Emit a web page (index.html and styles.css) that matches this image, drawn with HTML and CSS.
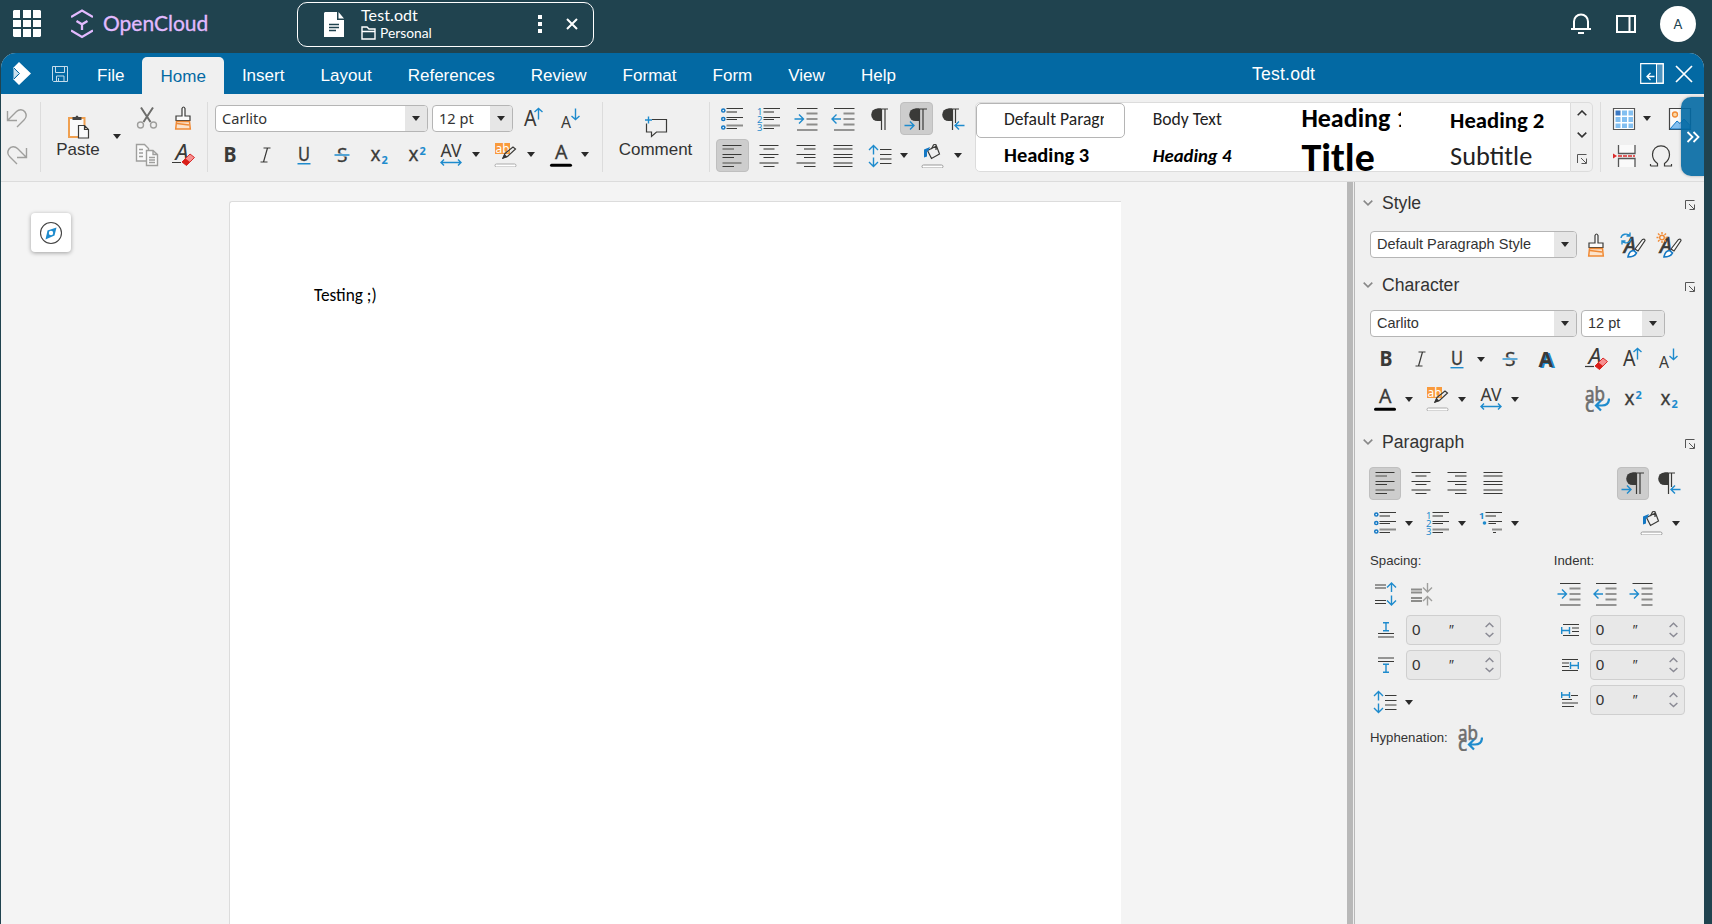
FILE: index.html
```html
<!DOCTYPE html>
<html lang="en">
<head>
    <meta charset="UTF-8">
    <meta name="viewport" content="width=device-width, initial-scale=1.0">
    <title>Test.odt - OpenCloud</title>
    <link rel="stylesheet" href="styles.css">
</head>
<body>
    <!-- Icon sprite -->
    <svg class="sprite" xmlns="http://www.w3.org/2000/svg">
        <symbol id="i-undo" viewBox="0 0 24 24"><path class="g" d="M2.5 5v9.500h9.500M3 14L11.500 5.500C14 3 18 3 20 6c2 3 1 6-1 8l-7 7"/></symbol>
        <symbol id="i-redo" viewBox="0 0 24 24"><path class="g" d="M21.500 5v9.500H12M21 14L12.500 5.500C10 3 6 3 4 6c-2 3-1 6 1 8l7 7"/></symbol>
        <symbol id="i-paste" viewBox="0 0 24 24"><path d="M3 3h15.500v19H3z" fill="#fafafa" stroke="#f0a050" stroke-width="2"/><path d="M6.500 2h3q.5-1.500 1.500-1.500T12.500 2h3v3h-9z" fill="#444"/><path class="d f" d="M12.500 10.500h6l4 4v8.500h-10zM18.500 10.500v4h4"/></symbol>
        <symbol id="i-cut" viewBox="0 0 24 24"><path d="M6 1.500L15.500 16M18 1.500L8.500 16" stroke="#6d6d6b" stroke-width="2" fill="none"/><circle class="g" cx="5.500" cy="19" r="3"/><circle class="g" cx="18.500" cy="19" r="3"/></symbol>
        <symbol id="i-copy" viewBox="0 0 24 24"><path class="g f" d="M1.500 1.500h8l4 4v12.500h-12z"/><path class="g" d="M4 6.500h4M4 10h4M4 13.500h4"/><path class="g f" d="M11.500 7.500h6.500l4.500 4v11h-11zM18 7.500v4h4.500"/><path class="g" d="M14 14.500h6M14 17h6M14 19.500h6"/></symbol>
        <symbol id="i-brush" viewBox="0 0 24 24"><path class="d f" d="M10 10V2.500q1.500-3 3 0V10h5v4.500H4V10z"/><path d="M4.500 15.500h13l.8 7.500H3.700z" fill="#fbe3cc" stroke="#f08a35" stroke-width="1.500"/><path d="M5 17.500l12 1.500" stroke="#f08a35" stroke-width="1.500"/></symbol>
        <symbol id="i-clear" viewBox="0 0 24 24"><text class="t" x="3.500" y="17" font-size="21" font-style="italic" textLength="13" lengthAdjust="spacingAndGlyphs">A</text><path class="d" d="M0 19.500h9" stroke-width="1.600"/><path d="M10 19l8-8 4.500 3.500-8 8z" fill="#f78f8f" stroke="#d92b2b"/><path d="M10 19l3.500-3.500 4.500 3.500-3.500 3.500z" fill="#d91e18"/></symbol>
        <symbol id="i-growfont" viewBox="0 0 24 24"><text class="t" x="2" y="19" font-size="21" textLength="12.500" lengthAdjust="spacingAndGlyphs">A</text><path class="b" d="M16.500 12.500V1.500M12.500 5l4-3.500 4 3.500"/></symbol>
        <symbol id="i-shrinkfont" viewBox="0 0 24 24"><text class="t" x="2" y="21" font-size="17" textLength="10" lengthAdjust="spacingAndGlyphs">A</text><path class="b" d="M16.500 1.500v11M12.500 9l4 3.500 4-3.500"/></symbol>
        <symbol id="i-bold" viewBox="0 0 24 24"><text class="t" x="6.500" y="19" font-size="20.500" font-weight="700" textLength="13" lengthAdjust="spacingAndGlyphs">B</text></symbol>
        <symbol id="i-italic" viewBox="0 0 24 24"><path class="d" d="M9.500 5h7M6.500 19h7M13.500 5l-4 14" stroke-width="1.800"/></symbol>
        <symbol id="i-underline" viewBox="0 0 24 24"><text class="t" x="6" y="18" font-size="20" stroke="#3a3a38" stroke-width=".4" textLength="12" lengthAdjust="spacingAndGlyphs">U</text><path class="b" d="M5.500 20.700h13" stroke-width="1.200"/></symbol>
        <symbol id="i-strike" viewBox="0 0 24 24"><text class="t" x="7" y="19" font-size="20" stroke="#3a3a38" stroke-width=".3" textLength="10.500" lengthAdjust="spacingAndGlyphs">S</text><path d="M4 10.500h16v3H4z" fill="#f0f0f0"/><path class="b" d="M4.500 12h15"/></symbol>
        <symbol id="i-sub" viewBox="0 0 24 24"><text class="t" x="3.500" y="18" font-size="20" stroke="#3a3a38" stroke-width=".3" textLength="10" lengthAdjust="spacingAndGlyphs">x</text><text class="tb" x="14.500" y="21" font-size="11" font-weight="700">2</text></symbol>
        <symbol id="i-sup" viewBox="0 0 24 24"><text class="t" x="3.500" y="18" font-size="20" stroke="#3a3a38" stroke-width=".3" textLength="10" lengthAdjust="spacingAndGlyphs">x</text><text class="tb" x="14.500" y="12" font-size="11" font-weight="700">2</text></symbol>
        <symbol id="i-spacing" viewBox="0 0 24 24"><text class="t" x="1.500" y="14" font-size="18" textLength="21" lengthAdjust="spacingAndGlyphs">AV</text><path class="b" d="M2 19.500h20M5 16.500l-3 3 3 3M19 16.500l3 3-3 3"/></symbol>
        <symbol id="i-highlight" viewBox="0 0 24 24"><path d="M1 0h15v11H1z" fill="#f99a3c"/><text x="1.500" y="9.500" font-size="12" fill="#fff" font-family="Noto Sans">ab</text><path class="d" d="M9 15l2-4.500 8-6.500 2.500 2-8 7.500z" fill="#f0f0f0"/><path d="M8 16l2.500-5 3 3z" fill="#333"/><rect x="1" y="21" width="21" height="3" rx="1.500" fill="#fff" stroke="#aaa" stroke-width="1"/></symbol>
        <symbol id="i-color" viewBox="0 0 24 24"><text class="t" x="6" y="16" font-size="20" stroke="#3a3a38" stroke-width=".3" textLength="12.500" lengthAdjust="spacingAndGlyphs">A</text><rect x="1" y="20.800" width="22" height="3" rx="1.500" fill="#000"/></symbol>
        <symbol id="i-comment" viewBox="0 0 24 24"><path class="d" d="M8 4.500h14.500v12.500h-10L7.500 21.500v-4.500h-5V8.500"/><path class="b" d="M1 5h7M4.500 1.500v7"/></symbol>
        <symbol id="i-bullets" viewBox="0 0 24 24"><circle class="b2" cx="3.300" cy="3.500" r="1.600"/><circle class="b2" cx="3.300" cy="12" r="1.600"/><circle class="b2" cx="3.300" cy="20.500" r="1.600"/><path class="d" d="M6.500 1.500H23M6.500 10.500H23M6.500 12.500H17M6.500 21.500H17" stroke-width="1.200"/><path class="m" d="M6.500 5H17M6.500 18.500H23"/></symbol>
        <symbol id="i-numbers" viewBox="0 0 24 24"><text class="tb" x="0" y="8" font-size="9.500">1</text><text class="tb" x="0" y="16" font-size="9.500">2</text><text class="tb" x="0" y="24" font-size="9.500">3</text><path class="d" d="M6.500 1.500H23M6.500 10.500H23M6.500 12.500H17M6.500 21.500H17" stroke-width="1.200"/><path class="m" d="M6.500 5H17M6.500 18.500H23"/></symbol>
        <symbol id="i-outline" viewBox="0 0 24 24"><text class="tb" x="0" y="8" font-size="9.500" font-weight="700">1</text><circle cx="5.500" cy="12" r="1.800" fill="#1e8bcd"/><path class="d" d="M6.500 1.500H23M9.500 10.500H23M9.500 12.500H17M14 21.500h3" stroke-width="1.200"/><path class="m" d="M6.500 5H17M13 18.500H23"/></symbol>
        <symbol id="i-indent" viewBox="0 0 24 24"><path class="d" d="M3 1.500h20.500M12.500 12h11M3 23h20.500" stroke-width="1.300"/><path class="m" d="M12.500 6.500h11M12.500 17.500h11"/><path class="b" d="M.5 12h9M5 7.500L9.500 12 5 16.500"/></symbol>
        <symbol id="i-outdent" viewBox="0 0 24 24"><path class="d" d="M3 1.500h20.500M12.500 12h11M3 23h20.500" stroke-width="1.300"/><path class="m" d="M12.500 6.500h11M12.500 17.500h11"/><path class="b" d="M10 12H1M5.500 7.500L1 12l4.500 4.500"/></symbol>
        <symbol id="i-hanging" viewBox="0 0 24 24"><path class="d" d="M3.500 1.500h20M12.500 12h11M12.500 23h11" stroke-width="1.300"/><path class="m" d="M12.500 6.500h11M12.500 17.500h11"/><path class="b" d="M.5 12h9M5 7.500L9.500 12 5 16.500"/></symbol>
        <symbol id="i-para" viewBox="0 0 24 24"><path d="M13 1.500H9.500a6.300 6.300 0 000 12.600H13z" fill="#3a3a38"/><path class="d" d="M9.500 2h10.500M13.500 2v21M17 2v21"/></symbol>
        <symbol id="i-ltr" viewBox="0 0 24 24"><path d="M15 1.500h-3.500a6.300 6.300 0 000 12.600H15z" fill="#3a3a38"/><path class="d" d="M11.500 2h11.500M15.500 2v21M19 2v21" stroke-width="1.600"/><path class="b" d="M.5 18.500H10M6 14.500l4 4-4 4"/></symbol>
        <symbol id="i-rtl" viewBox="0 0 24 24"><path d="M11 1.500H7.500a6.300 6.300 0 000 12.600H11z" fill="#3a3a38"/><path class="d" d="M7.500 2h10.500M11.500 2v21M14.500 2v14" stroke-width="1.600"/><path class="b" d="M23.500 18.500H14M18 14.500l-4 4 4 4"/></symbol>
        <symbol id="i-left" viewBox="0 0 24 24"><path class="m" d="M2.500 5H14M2.500 19h19"/><path class="d" d="M2.500 1.500h19M2.500 10.500h19M2.500 13.500H14M2.500 22.500H14" stroke-width="1.300"/></symbol>
        <symbol id="i-center" viewBox="0 0 24 24"><path class="m" d="M6.500 5h11M2.500 19h19"/><path class="d" d="M2.500 1.500h19M2.500 10.500h19M6.500 13.500h11M6.500 22.500h11" stroke-width="1.300"/></symbol>
        <symbol id="i-right" viewBox="0 0 24 24"><path class="m" d="M10 5h11.500M2.500 19h19"/><path class="d" d="M2.500 1.500h19M2.500 10.500h19M10 13.500h11.500M10 22.500h11.500" stroke-width="1.300"/></symbol>
        <symbol id="i-justify" viewBox="0 0 24 24"><path class="m" d="M2.500 5h19M2.500 19h19"/><path class="d" d="M2.500 1.500h19M2.500 10.500h19M2.500 13.500h19M2.500 22.500h19" stroke-width="1.300"/></symbol>
        <symbol id="i-linespace" viewBox="0 0 24 24"><path class="b" d="M5.500 10.500V1.500M1 6l4.500-4.500L10 6M5.500 13.500v9M1 18l4.500 4.500L10 18"/><path class="d" d="M12 5.500h11.500M12 10.500h11.500M12 19.500h11.500" stroke-width="1.300"/><path class="m" d="M12 15h11.500"/></symbol>
        <symbol id="i-fill" viewBox="0 0 24 24"><path class="d" d="M7.500 8l9-4.500 3 8-8 4.500zM11.500 6.500l2-4q2-1.500 2.500 0v5" fill="#fff" transform="translate(-1 -1.500)"/><path d="M3 13.500V5.500l6-2.500-1.500 3.500-1.500 1v5z" fill="#1478c4"/><rect x="1" y="21" width="21" height="3" rx="1.500" fill="#fff" stroke="#999"/></symbol>
        <symbol id="i-shadowa" viewBox="0 0 24 24"><text x="6" y="20.500" font-size="22" font-weight="700" font-family="Noto Sans" fill="#1e8bcd" textLength="15" lengthAdjust="spacingAndGlyphs">A</text><text class="t" x="4.500" y="19.500" font-size="22" font-weight="700" textLength="14.500" lengthAdjust="spacingAndGlyphs">A</text></symbol>
        <symbol id="i-hyphen" viewBox="0 0 26 26"><text x="1" y="14.500" font-size="20" font-family="Noto Sans" fill="#6d6d6d" stroke="#6d6d6d" stroke-width=".6" textLength="20" lengthAdjust="spacingAndGlyphs">ab</text><text x="1" y="25.500" font-size="19" font-family="Noto Sans" fill="#6d6d6d" stroke="#6d6d6d" stroke-width=".6">c</text><path d="M25 12.500c0 5-2 7-7 7h-6M17 14.500l-5 5 5 5" fill="none" stroke="#1e8bcd" stroke-width="2.200"/></symbol>
        <symbol id="i-table" viewBox="0 0 24 24"><path d="M1.500 1.500h21v21h-21z" fill="#fff" stroke="#555" stroke-width="1.200"/><path d="M3.500 3.500h5v5h-5z" fill="#3b78c2"/><path d="M10 3.500h5v5h-5zM16.500 3.500h4.500v5h-4.500zM3.500 10h5v5h-5zM10 10h5v5h-5zM16.500 10h4.500v5h-4.500zM3.500 16.500h5v4.500h-5zM10 16.500h5v4.500h-5zM16.500 16.500h4.500v4.500h-4.500z" fill="#83bff0"/></symbol>
        <symbol id="i-image" viewBox="0 0 24 24"><path d="M1.500 1.500h21v21h-21z" fill="#fafafa" stroke="#444" stroke-width="1.200"/><circle cx="7" cy="7.500" r="2.500" fill="#fbd9a8" stroke="#f08a35" stroke-width="1.300"/><path d="M2 22l7-8 3 2.500L16 12l6 6.500V22z" fill="#83bff0" stroke="#1478c4"/></symbol>
        <symbol id="i-break" viewBox="0 0 24 24"><path d="M6.500 1v8.500h16.500V1M6.500 23v-8.500h16.500V23" fill="#fafafa" stroke="#555" stroke-width="1.300"/><path d="M6 12h17" stroke="#d92b2b" stroke-width="1.500" stroke-dasharray="4 1"/><path d="M1 9.500l4 2.500-4 2.500z" fill="#d92b2b"/></symbol>
        <symbol id="i-omega" viewBox="0 0 24 24"><path class="d" d="M1.500 22h7v-2.500Q3.500 16 3.500 10.500C3.500 5 7.500 1.800 12 1.800S20.500 5 20.500 10.500q0 5.500-5 9V22h7v-2M1.500 20v2"/></symbol>
        <symbol id="i-caret" viewBox="0 0 8 5"><path d="M0 0h8L4 5z" fill="#2a2a2a"/></symbol>
        <symbol id="i-dialog" viewBox="0 0 10 10"><path d="M.5 9V.5H9.500M4 4l5 5M9.500 4.500v5h-5" fill="none" stroke="#555" stroke-width="1"/></symbol>
        <symbol id="i-chev" viewBox="0 0 10 6"><path d="M.7.7L5 4.800 9.300.7" fill="none" stroke="currentColor" stroke-width="1.600"/></symbol>
        <symbol id="i-up" viewBox="0 0 10 6"><path d="M.7 5.200L5 1l4.300 4.200" fill="none" stroke="currentColor" stroke-width="1.600"/></symbol>
        <symbol id="i-update" viewBox="0 0 26 26"><text class="t" x="4" y="20.500" font-size="21" font-style="italic" stroke="#3a3a38" stroke-width=".7">A</text><path class="b" d="M1 6a5 4.500 0 019-2M10 .5V4H6.500M11 6.500a5 4.500 0 01-9 2.500M2 12.500V9h3.500" stroke-width="1.700"/><path class="d f" d="M15 17l7.500-9.500q2.500-1 2.500 1L18 19z"/><path d="M8 25q1-6 5.500-6.500l3 2.500q-2 4-8.500 4z" fill="#fff" stroke="#1478c4" stroke-width="1.600"/></symbol>
        <symbol id="i-newstyle" viewBox="0 0 26 26"><text class="t" x="4" y="20.500" font-size="21" font-style="italic" stroke="#3a3a38" stroke-width=".7">A</text><g stroke="#f08a35" stroke-width="1.400" fill="none"><circle cx="6" cy="5.500" r="2.300"/><path d="M6 0v2M6 9v2M.5 5.500h2M9.500 5.500h2M2 1.500L3.500 3M8.500 8L10 9.500M10 1.500L8.500 3M3.500 8L2 9.500"/></g><path class="d f" d="M15 17l7.500-9.500q2.500-1 2.500 1L18 19z"/><path d="M8 25q1-6 5.500-6.500l3 2.500q-2 4-8.500 4z" fill="#fff" stroke="#1478c4" stroke-width="1.600"/></symbol>
        <symbol id="i-inc" viewBox="0 0 24 24"><path class="d" d="M2 3h11M2 6h11M2 18.500h11M2 21.500h11" stroke-width="1.300"/><path class="b" d="M18.500 10V1M14 5.500L18.500 1 23 5.500M18.500 13.500v9.500M14 18.500l4.500 4.500 4.500-4.500" stroke-width="1.600"/></symbol>
        <symbol id="i-dec" viewBox="0 0 24 24"><path class="m" d="M2 7.500h11M2 10.500h11M2 16h11M2 19h11" stroke-width="1.300"/><path class="g" d="M18.500 1v9M14 5.500l4.500 4.500L23 5.500M18.500 23.500v-9M14 19l4.500-4.500L23 19"/></symbol>
        <symbol id="i-above" viewBox="0 0 16 16"><path class="b" d="M5 .8h6M8 .8v8M5 8.800h6"/><path class="d" d="M0 11.500h16M0 15h16"/></symbol>
        <symbol id="i-below" viewBox="0 0 16 16"><path class="b" d="M5 7.200h6M8 7.200v8M5 15.200h6"/><path class="d" d="M0 1h16M0 4.500h16"/></symbol>
        <symbol id="i-before" viewBox="0 0 18 16"><path class="d" d="M2 2.500h16M11 6h7M11 9.500h7M2 13.500h16" stroke-width="1.300"/><path class="b" d="M.7 5v7M8.500 5v7M.7 8.500h8"/></symbol>
        <symbol id="i-after" viewBox="0 0 18 16"><path class="d" d="M1 2.500h16M1 6h7M1 9.500h7M1 13.500h16" stroke-width="1.300"/><path class="b" d="M9.500 5v7M17.300 5v7M9.500 8.500h8"/></symbol>
        <symbol id="i-first" viewBox="0 0 18 16"><path class="d" d="M10 3.500h7M1 7.500h10M1 11h16M1 14.500h12" stroke-width="1.300"/><path class="b" d="M.7 0v6M8.500 0v6M.7 3h8"/></symbol>
    </svg>

    <header class="topbar">
        <svg class="apps" viewBox="0 0 28 28"><path fill="#fff" d="M1 0h6v8H0V1zM10 0h8v8h-8zM20 0h7l1 1v7h-8zM0 10h8v7H0zM10 10h8v7h-8zM20 10h8v7h-8zM0 19h8v8H1l-1-1zM10 19h8v8h-8zM20 19h8v7l-1 1h-7z"/></svg>
        <svg class="logo" viewBox="0 0 22 30"><g fill="none" stroke="#e2baff" stroke-width="2.300"><path d="M0 8l11-6.500L22 8M0 21.500L11 28l11-6.500M5.500 12l5.500 3.300 5.500-3.300M11 15v6"/></g></svg>
        <span class="brand">OpenCloud</span>
        <div class="file-tab">
            <svg class="doc" viewBox="0 0 20 26"><path fill="#fff" d="M1 0h12v8h7v17H0V1zM14.500 0L20 6.500h-5.500z"/><path d="M5 12.500h10M5 15.500h10M5 18.500h7" stroke="#20434f" stroke-width="1.500"/></svg>
            <div class="file-info">
                <span class="file-name">Test.odt</span>
                <span class="file-space"><svg viewBox="0 0 15 14"><path d="M1 13V1h5l2 2h6v10zM1 5.500h13" fill="none" stroke="#fff" stroke-width="1.400"/></svg>Personal</span>
            </div>
            <svg class="dots" viewBox="0 0 4 18"><path fill="#fff" d="M0 0h4v4H0zM0 7h4v4H0zM0 14h4v4H0z"/></svg>
            <svg class="close" viewBox="0 0 12 12"><path d="M1 1l10 10M11 1L1 11" stroke="#fff" stroke-width="2"/></svg>
        </div>
        <div class="top-right">
            <svg class="bell" viewBox="0 0 20 22"><path d="M3 16V8.500a7 7 0 0114 0V16M0 16h20M7 20h6" fill="none" stroke="#fff" stroke-width="2"/></svg>
            <svg class="panel" viewBox="0 0 20 18"><path d="M1 1h18v16H1zM13.500 1v16" fill="none" stroke="#fff" stroke-width="2"/></svg>
            <span class="avatar">A</span>
        </div>
    </header>

    <main class="office">
        <nav class="menubar">
            <svg class="collabora" viewBox="0 0 18 23"><path fill="#fff" d="M6 0l12 11.500L6 23 0 17l5.500-5.500L0 6z"/><path d="M.5 6.500l5 5-5 5z" fill="#fff" opacity=".8"/><path d="M1 6l5.500 5.500L1 17" stroke="#0369a3" fill="none"/></svg>
            <svg class="save" viewBox="0 0 16 16"><path d="M.5.5h15v15h-14l-1-1zM3.500.5v6h9v-6M4.500 15.500V10h7.500v5.500M6.500 12v3" fill="none" stroke="#c5dceb"/></svg>
            <div class="tabs">
                <a class="tab">File</a>
                <a class="tab active">Home</a>
                <a class="tab">Insert</a>
                <a class="tab">Layout</a>
                <a class="tab">References</a>
                <a class="tab">Review</a>
                <a class="tab">Format</a>
                <a class="tab">Form</a>
                <a class="tab">View</a>
                <a class="tab">Help</a>
            </div>
            <span class="doc-title">Test.odt</span>
            <svg class="fold" viewBox="0 0 24 21"><path d="M.7.7h22.600v19.600H.7z" fill="none" stroke="#fff" stroke-width="1.200"/><path d="M16.500 1h6.500v19h-6.500z" fill="#4d94c0" stroke="#fff"/><path d="M14.500 13.500H7M10.500 10L7 13.500l3.500 3.500" fill="none" stroke="#fff" stroke-width="1.300"/></svg>
            <svg class="close-doc" viewBox="0 0 18 18"><path d="M1 1l16 16M17 1L1 17" stroke="#fff" stroke-width="1.700"/></svg>
        </nav>

        <div class="toolbar">
            <div class="group g-history">
                <div class="row"><svg class="ico"><use href="#i-undo"/></svg></div>
                <div class="row"><svg class="ico"><use href="#i-redo"/></svg></div>
            </div>
            <div class="group g-clip">
                <div class="big"><svg class="ico"><use href="#i-paste"/></svg><span>Paste</span></div>
                <svg class="caret"><use href="#i-caret"/></svg>
                <div class="clip-tools">
                    <div class="row"><span class="btn"><svg class="ico"><use href="#i-cut"/></svg></span><span class="btn"><svg class="ico"><use href="#i-brush"/></svg></span></div>
                    <div class="row"><span class="btn"><svg class="ico"><use href="#i-copy"/></svg></span><span class="btn"><svg class="ico"><use href="#i-clear"/></svg></span></div>
                </div>
            </div>
            <div class="group g-font">
                <div class="row combos">
                    <div class="combo font"><span>Carlito</span><i><svg class="caret"><use href="#i-caret"/></svg></i></div>
                    <div class="combo size"><span>12 pt</span><i><svg class="caret"><use href="#i-caret"/></svg></i></div>
                    <div class="resize">
                        <svg class="ico"><use href="#i-growfont"/></svg>
                        <svg class="ico"><use href="#i-shrinkfont"/></svg>
                    </div>
                </div>
                <div class="row">
                    <span class="btn"><svg class="ico"><use href="#i-bold"/></svg></span>
                    <span class="btn"><svg class="ico"><use href="#i-italic"/></svg></span>
                    <span class="btn"><svg class="ico"><use href="#i-underline"/></svg></span>
                    <span class="btn"><svg class="ico"><use href="#i-strike"/></svg></span>
                    <span class="btn"><svg class="ico"><use href="#i-sub"/></svg></span>
                    <span class="btn"><svg class="ico"><use href="#i-sup"/></svg></span>
                    <span class="btn kern"><svg class="ico"><use href="#i-spacing"/></svg></span><span class="drop"><svg class="caret"><use href="#i-caret"/></svg></span>
                    <span class="btn"><svg class="ico"><use href="#i-highlight"/></svg></span><span class="drop"><svg class="caret"><use href="#i-caret"/></svg></span>
                    <span class="btn"><svg class="ico"><use href="#i-color"/></svg></span><span class="drop"><svg class="caret"><use href="#i-caret"/></svg></span>
                </div>
            </div>
            <div class="group g-comment">
                <div class="big"><svg class="ico"><use href="#i-comment"/></svg><span>Comment</span></div>
            </div>
            <div class="group g-para">
                <div class="row">
                    <span class="btn"><svg class="ico"><use href="#i-bullets"/></svg></span>
                    <span class="btn"><svg class="ico"><use href="#i-numbers"/></svg></span>
                    <span class="btn"><svg class="ico"><use href="#i-indent"/></svg></span>
                    <span class="btn"><svg class="ico"><use href="#i-outdent"/></svg></span>
                    <span class="btn"><svg class="ico"><use href="#i-para"/></svg></span>
                    <span class="btn"><b class="pressed"><svg class="ico"><use href="#i-ltr"/></svg></b></span>
                    <span class="btn"><svg class="ico"><use href="#i-rtl"/></svg></span>
                </div>
                <div class="row">
                    <span class="btn"><b class="pressed"><svg class="ico"><use href="#i-left"/></svg></b></span>
                    <span class="btn"><svg class="ico"><use href="#i-center"/></svg></span>
                    <span class="btn"><svg class="ico"><use href="#i-right"/></svg></span>
                    <span class="btn"><svg class="ico"><use href="#i-justify"/></svg></span>
                    <span class="btn"><svg class="ico"><use href="#i-linespace"/></svg></span><span class="drop"><svg class="caret"><use href="#i-caret"/></svg></span>
                    <span class="btn"><svg class="ico"><use href="#i-fill"/></svg></span><span class="drop"><svg class="caret"><use href="#i-caret"/></svg></span>
                </div>
            </div>
            <div class="group g-styles">
                <div class="gallery">
                    <div class="style selected"><span class="s-default">Default Paragraph</span></div>
                    <div class="style"><span class="s-body">Body Text</span></div>
                    <div class="style"><span class="s-h1">Heading 1</span></div>
                    <div class="style"><span class="s-h2">Heading 2</span></div>
                    <div class="style"><span class="s-h3">Heading 3</span></div>
                    <div class="style"><span class="s-h4">Heading 4</span></div>
                    <div class="style"><span class="s-title">Title</span></div>
                    <div class="style"><span class="s-sub">Subtitle</span></div>
                </div>
                <div class="gallery-nav">
                    <svg class="chev"><use href="#i-up"/></svg>
                    <svg class="chev"><use href="#i-chev"/></svg>
                    <svg class="dialog"><use href="#i-dialog"/></svg>
                </div>
            </div>
            <div class="group g-insert">
                <div class="row"><svg class="ico"><use href="#i-table"/></svg><svg class="caret"><use href="#i-caret"/></svg><svg class="ico"><use href="#i-image"/></svg></div>
                <div class="row"><svg class="ico"><use href="#i-break"/></svg><svg class="ico omega"><use href="#i-omega"/></svg></div>
            </div>
            <div class="scroll-right"><svg viewBox="0 0 14 12"><path d="M1.500 1l5 5-5 5M7.500 1l5 5-5 5" fill="none" stroke="#fff" stroke-width="1.800"/></svg></div>
        </div>

        <div class="workspace">
            <div class="canvas">
                <div class="navigator"><svg viewBox="0 0 24 24"><circle cx="12" cy="12" r="10.500" fill="none" stroke="#444" stroke-width="1.100"/><path d="M17.500 6.500l-2 8-9 4 2-9z" fill="#1e8bcd"/><circle cx="12" cy="12" r="2.200" fill="#fff"/></svg></div>
                <div class="page"><p>Testing ;)</p></div>
            </div>
            <aside class="sidebar">
                <div class="section-head"><svg class="chev"><use href="#i-chev"/></svg><h2>Style</h2><svg class="dialog"><use href="#i-dialog"/></svg></div>
                <div class="side-row style-row">
                    <div class="combo wide"><span>Default Paragraph Style</span><i><svg class="caret"><use href="#i-caret"/></svg></i></div>
                    <div class="cells">
                        <span class="cell"><svg class="ico"><use href="#i-brush"/></svg></span>
                        <span class="cell"><svg class="ico lg"><use href="#i-update"/></svg></span>
                        <span class="cell"><svg class="ico lg"><use href="#i-newstyle"/></svg></span>
                    </div>
                </div>

                <div class="section-head char-head"><svg class="chev"><use href="#i-chev"/></svg><h2>Character</h2><svg class="dialog"><use href="#i-dialog"/></svg></div>
                <div class="side-row font-row">
                    <div class="combo wide"><span>Carlito</span><i><svg class="caret"><use href="#i-caret"/></svg></i></div>
                    <div class="combo small"><span>12 pt</span><i><svg class="caret"><use href="#i-caret"/></svg></i></div>
                </div>
                <div class="side-row icons">
                    <div class="cells">
                        <span class="cell"><svg class="ico"><use href="#i-bold"/></svg></span>
                        <span class="cell"><svg class="ico"><use href="#i-italic"/></svg></span>
                        <span class="cell"><svg class="ico"><use href="#i-underline"/></svg></span><span class="drop"><svg class="caret"><use href="#i-caret"/></svg></span>
                        <span class="cell"><svg class="ico"><use href="#i-strike"/></svg></span>
                        <span class="cell"><svg class="ico"><use href="#i-shadowa"/></svg></span>
                    </div>
                    <div class="cells">
                        <span class="cell"><svg class="ico"><use href="#i-clear"/></svg></span>
                        <span class="cell"><svg class="ico"><use href="#i-growfont"/></svg></span>
                        <span class="cell"><svg class="ico"><use href="#i-shrinkfont"/></svg></span>
                    </div>
                </div>
                <div class="side-row icons">
                    <div class="cells">
                        <span class="cell"><svg class="ico"><use href="#i-color"/></svg></span><span class="drop"><svg class="caret"><use href="#i-caret"/></svg></span>
                        <span class="cell"><svg class="ico"><use href="#i-highlight"/></svg></span><span class="drop"><svg class="caret"><use href="#i-caret"/></svg></span>
                        <span class="cell"><svg class="ico"><use href="#i-spacing"/></svg></span><span class="drop"><svg class="caret"><use href="#i-caret"/></svg></span>
                    </div>
                    <div class="cells">
                        <span class="cell"><svg class="ico lg"><use href="#i-hyphen"/></svg></span>
                        <span class="cell"><svg class="ico"><use href="#i-sup"/></svg></span>
                        <span class="cell"><svg class="ico"><use href="#i-sub"/></svg></span>
                    </div>
                </div>

                <div class="section-head para-head"><svg class="chev"><use href="#i-chev"/></svg><h2>Paragraph</h2><svg class="dialog"><use href="#i-dialog"/></svg></div>
                <div class="side-row icons">
                    <div class="cells">
                        <span class="cell"><b class="pressed"><svg class="ico"><use href="#i-left"/></svg></b></span>
                        <span class="cell"><svg class="ico"><use href="#i-center"/></svg></span>
                        <span class="cell"><svg class="ico"><use href="#i-right"/></svg></span>
                        <span class="cell"><svg class="ico"><use href="#i-justify"/></svg></span>
                    </div>
                    <div class="cells">
                        <span class="cell"><b class="pressed"><svg class="ico"><use href="#i-ltr"/></svg></b></span>
                        <span class="cell"><svg class="ico"><use href="#i-rtl"/></svg></span>
                    </div>
                </div>
                <div class="side-row icons">
                    <div class="cells">
                        <span class="cell"><svg class="ico"><use href="#i-bullets"/></svg></span><span class="drop"><svg class="caret"><use href="#i-caret"/></svg></span>
                        <span class="cell"><svg class="ico"><use href="#i-numbers"/></svg></span><span class="drop"><svg class="caret"><use href="#i-caret"/></svg></span>
                        <span class="cell"><svg class="ico"><use href="#i-outline"/></svg></span><span class="drop"><svg class="caret"><use href="#i-caret"/></svg></span>
                    </div>
                    <div class="cells">
                        <span class="cell"><svg class="ico"><use href="#i-fill"/></svg></span><span class="drop"><svg class="caret"><use href="#i-caret"/></svg></span>
                    </div>
                </div>
                <div class="metrics">
                    <div class="spacing-col">
                        <label>Spacing:</label>
                        <div class="cells"><span class="cell"><svg class="ico"><use href="#i-inc"/></svg></span><span class="cell"><svg class="ico"><use href="#i-dec"/></svg></span></div>
                        <div class="field"><svg class="mini"><use href="#i-above"/></svg><div class="spin"><span>0</span><em>″</em><div><svg class="arrow"><use href="#i-up"/></svg><svg class="arrow"><use href="#i-chev"/></svg></div></div></div>
                        <div class="field"><svg class="mini"><use href="#i-below"/></svg><div class="spin"><span>0</span><em>″</em><div><svg class="arrow"><use href="#i-up"/></svg><svg class="arrow"><use href="#i-chev"/></svg></div></div></div>
                        <div class="cells line-row"><span class="cell"><svg class="ico"><use href="#i-linespace"/></svg></span><span class="drop"><svg class="caret"><use href="#i-caret"/></svg></span></div>
                    </div>
                    <div class="indent-col">
                        <label>Indent:</label>
                        <div class="cells"><span class="cell"><svg class="ico"><use href="#i-indent"/></svg></span><span class="cell"><svg class="ico"><use href="#i-outdent"/></svg></span><span class="cell"><svg class="ico"><use href="#i-hanging"/></svg></span></div>
                        <div class="field"><svg class="mini"><use href="#i-before"/></svg><div class="spin"><span>0</span><em>″</em><div><svg class="arrow"><use href="#i-up"/></svg><svg class="arrow"><use href="#i-chev"/></svg></div></div></div>
                        <div class="field"><svg class="mini"><use href="#i-after"/></svg><div class="spin"><span>0</span><em>″</em><div><svg class="arrow"><use href="#i-up"/></svg><svg class="arrow"><use href="#i-chev"/></svg></div></div></div>
                        <div class="field"><svg class="mini"><use href="#i-first"/></svg><div class="spin"><span>0</span><em>″</em><div><svg class="arrow"><use href="#i-up"/></svg><svg class="arrow"><use href="#i-chev"/></svg></div></div></div>
                    </div>
                </div>
                <div class="hyphenation"><label>Hyphenation:</label><svg class="ico lg"><use href="#i-hyphen"/></svg></div>
            </aside>
        </div>
    </main>
</body>
</html>
```

FILE: styles.css
```css
:root {
    --shell: #20434f;
    --primary: #0369a3;
    --bar: #f0f0f0;
    --canvas: #f4f4f4;
    --line: #dcdcdc;
    --border: #b5b5b5;
    --text: #333;
    --dark: #3a3a38;
    --blue: #1e8bcd;
}

* {
    box-sizing: border-box;
}

body {
    margin: 0;
    height: 100vh;
    overflow: hidden;
    display: flex;
    flex-direction: column;
    background-color: var(--shell);
    font-family: "Liberation Sans", Arial, sans-serif;
    color: var(--text);
}

svg {
    display: block;
    flex: none;
}

/* Icon strokes */
.sprite {
    display: none;
}

.d { fill: none; stroke: var(--dark); stroke-width: 1.2; }
.m { fill: none; stroke: #8d8d8b; stroke-width: 1.8; }
.g { fill: none; stroke: #9f9f9d; stroke-width: 1.4; }
.b { fill: none; stroke: var(--blue); stroke-width: 1.4; }
.b2 { fill: #e8f3fb; stroke: #1478c4; stroke-width: 1.5; }
.f { fill: #fafafa; }
.t { fill: var(--dark); font-family: "Noto Sans", sans-serif; }
.tb { fill: var(--blue); font-family: "Noto Sans", sans-serif; }

.ico { width: 24px; height: 24px; }
.ico.lg { width: 26px; height: 26px; }
.caret { width: 8px; height: 5px; }
.chev { width: 10px; height: 6px; }
.dialog { width: 10px; height: 10px; }

/* Top bar */
.topbar {
    height: 53px;
    flex: none;
    display: flex;
    align-items: flex-start;
    padding-left: 13px;
    font-family: Lato, sans-serif;
    color: #fff;
}

.apps { width: 28px; height: 28px; margin-top: 10px; }
.logo { width: 22px; height: 30px; margin: 9px 0 0 30px; }

.brand {
    width: 193px;
    padding: 10px 0 0 10px;
    font-size: 21px;
    line-height: 25px;
    color: #e2baff;
    -webkit-text-stroke: .3px #e2baff;
}

.file-tab {
    width: 297px;
    height: 45px;
    margin: 2px 0 0 11px;
    border: 1px solid #fff;
    border-radius: 10px;
    display: flex;
    padding-left: 26px;
}

.doc { width: 20px; height: 26px; margin: 9px 17px 0 0; }
.file-info { width: 177px; padding-top: 3px; }

.file-name {
    display: block;
    font-size: 16px;
    line-height: 18px;
    letter-spacing: .1px;
}

.file-space {
    display: flex;
    align-items: center;
    gap: 4px;
    font-size: 13.8px;
    line-height: 18px;
}

.file-space svg { width: 15px; height: 14px; }
.dots { width: 4px; height: 18px; margin-top: 12px; }
.close { width: 12px; height: 12px; margin: 15px 0 0 24px; }

.top-right {
    margin-left: auto;
    display: flex;
    align-items: center;
    padding: 6px 16px 0 0;
}

.bell { width: 20px; height: 22px; margin-right: 25px; }
.panel { width: 20px; height: 18px; margin-right: 24px; }

.avatar {
    width: 36px;
    height: 36px;
    border-radius: 50%;
    background-color: #fff;
    color: #20434f;
    font-size: 13px;
    line-height: 37px;
    text-align: center;
}

/* Office frame */
.office {
    flex: 1;
    min-height: 0;
    margin: 0 8px 0 1px;
    border-radius: 15px 15px 0 0;
    overflow: hidden;
    background-color: var(--bar);
    display: flex;
    flex-direction: column;
}

.menubar {
    height: 41px;
    flex: none;
    background-color: var(--primary);
    color: #fff;
    display: flex;
    font-size: 17.05px;
}

.collabora { width: 18px; height: 23px; margin: 9px 0 0 12px; }
.save { width: 16px; height: 16px; margin: 13px 0 0 21px; }

.tabs {
    display: flex;
    margin-left: 11px;
    padding-top: 4px;
}

.tab {
    padding: 0 18px;
    line-height: 38px;
}

.tab.active {
    background-color: var(--bar);
    color: var(--primary);
    border-radius: 5px 5px 0 0;
    line-height: 39px;
}

.doc-title {
    margin-left: auto;
    width: 388px;
    font-size: 17.6px;
    letter-spacing: .2px;
    line-height: 43px;
}

.fold { width: 24px; height: 21px; margin-top: 10px; }
.close-doc { width: 18px; height: 18px; margin: 12px 11px 0; }

/* Toolbar */
.toolbar {
    height: 88px;
    flex: none;
    display: flex;
    padding-top: 6px;
    border-bottom: 1px solid var(--line);
    position: relative;
}

.group {
    flex: none;
    height: 74px;
}

.g-history, .g-clip, .g-font, .g-comment, .g-styles {
    border-right: 1px solid var(--line);
    height: 70px;
    margin-top: 2px;
}

.row {
    height: 37px;
    display: flex;
    align-items: center;
}

.btn {
    width: 37px;
    display: flex;
    justify-content: center;
}

.drop {
    width: 17px;
    padding-left: 2px;
}

.pressed {
    width: 33px;
    height: 33px;
    margin: 0 -5px;
    display: flex;
    align-items: center;
    justify-content: center;
    background-color: #cdcdcd;
    border: 1px solid #bfbfbf;
    border-radius: 4px;
}

.g-history { width: 40px; padding-left: 4px; }
.g-history .row, .clip-tools .row, .g-font .row { margin-top: -3px; margin-bottom: 3px; }

.g-clip {
    width: 167px;
    display: flex;
}

.big {
    width: 74px;
    display: flex;
    flex-direction: column;
    align-items: center;
    padding-top: 13px;
    font-size: 17px;
    line-height: 22px;
}

.g-clip .caret { margin: 32px 0 0 -2px; }
.clip-tools { margin-left: 7px; }

.g-font {
    width: 395px;
    padding-left: 2px;
}

.g-font .btn { width: 37.6px; }
.g-font .kern { margin-left: -3px; }
.g-font .combos { padding: 2px 0 0 5px; }
.combos .combo + .combo { margin-left: 4px; }

.resize {
    display: flex;
    gap: 13px;
    margin-left: 9px;
}

.combo {
    height: 27px;
    flex: none;
    display: flex;
    border: 1px solid var(--border);
    border-radius: 4px;
    background-color: #fff;
    overflow: hidden;
    font-size: 14.5px;
    line-height: 25px;
}

.combo span {
    flex: 1;
    padding-left: 6px;
    white-space: nowrap;
}

.combo i {
    width: 22px;
    background-color: #e6e6e6;
    display: flex;
    align-items: center;
    justify-content: center;
}

.g-font .combo {
    font-family: "Noto Sans", sans-serif;
    font-size: 14.6px;
}

.combo.font { width: 213px; }
.combo.size { width: 81px; }
.combo.small { width: 84px; }
.combo.wide { width: 207px; }

.g-comment { width: 107px; }
.g-comment .big { width: 105px; }

.g-para {
    width: 265px;
    padding-left: 4px;
}

.g-para .btn { width: 36.8px; }

.g-styles {
    width: 626px;
    display: flex;
}

.gallery {
    width: 596px;
    height: 70px;
    border: 1px solid var(--line);
    border-radius: 5px 0 0 5px;
    background-color: #fff;
    display: grid;
    grid-template-columns: repeat(4, 148.7px);
    grid-template-rows: 35px 35px;
    overflow: hidden;
    color: #000;
    font-family: Carlito, Lato, sans-serif;
}

.style {
    padding-left: 27px;
    display: flex;
    align-items: center;
    border: 1px solid transparent;
}

.style.selected {
    border-color: var(--border);
    border-radius: 5px;
}

.style span {
    width: 100px;
    height: 33px;
    line-height: 32px;
    overflow: hidden;
    white-space: nowrap;
}

.gallery .s-default, .gallery .s-body { font-size: 17.6px; color: #222; line-height: 31px; }
.gallery .s-h1 { font-size: 26px; font-weight: 700; line-height: 28px; }
.gallery .s-h2 { font-size: 22.700px; font-weight: 700; }
.gallery .s-h3 { font-size: 20.500px; font-weight: 700; }
.gallery .s-h4 { font-size: 18.700px; font-weight: 700; font-style: italic; line-height: 33px; }
.gallery .s-title { font-size: 40px; font-weight: 700; line-height: 37px; }
.gallery .s-sub { font-size: 26.300px; color: #222; line-height: 34px; }

.gallery-nav {
    width: 22px;
    border: 1px solid var(--line);
    border-left: 0;
    border-radius: 0 5px 5px 0;
    display: flex;
    flex-direction: column;
    align-items: center;
    justify-content: space-between;
    padding: 7px 0;
}

.g-insert .row { padding-left: 11px; }
.g-insert .caret { margin: 0 17px 0 7px; }
.omega { margin-left: 13px; }

.scroll-right {
    position: absolute;
    right: 0;
    top: 3px;
    width: 23px;
    height: 79px;
    border-radius: 10px 0 0 10px;
    background-color: rgba(3, 105, 163, .9);
    box-shadow: 0 0 3px rgba(0, 0, 0, .3);
    display: flex;
    align-items: center;
    justify-content: center;
}

.scroll-right svg { width: 14px; height: 12px; }

/* Document */
.workspace {
    flex: 1;
    min-height: 0;
    display: flex;
}

.canvas {
    flex: 1;
    display: flex;
    align-items: flex-start;
    background-color: var(--canvas);
}

.navigator {
    width: 40px;
    height: 39px;
    margin: 31px 158px 0 30px;
    display: flex;
    align-items: center;
    justify-content: center;
    background-color: #fff;
    border-radius: 4px;
    box-shadow: 0 1px 4px rgba(0, 0, 0, .35);
}

.navigator svg { width: 24px; height: 24px; }

.page {
    width: 892px;
    height: 740px;
    margin-top: 19px;
    padding: 83px 84px;
    background-color: #fff;
    border: 1px solid var(--line);
    border-right: 0;
    border-radius: 3px 0 0 0;
}

.page p {
    margin: 0;
    color: #000;
    font-family: Carlito, Lato, sans-serif;
    font-size: 17.3px;
    line-height: 22px;
}

/* Sidebar */
.sidebar {
    width: 357px;
    flex: none;
    padding: 9px 17px 0 14px;
    background-color: var(--bar);
    border-left: 6px solid #b8b8b8;
    box-shadow: inset 1px 0 0 #eee, inset 2px 0 0 #b8b8b8;
}

.section-head {
    height: 24px;
    margin-left: -4px;
    display: flex;
    align-items: center;
    color: #888;
}

.section-head h2 {
    margin: 0 auto 0 9px;
    font-size: 17.6px;
    font-weight: 400;
    color: var(--text);
}

.section-head .dialog { margin: 3px -8px 0 0; }

.side-row {
    display: flex;
    align-items: center;
    justify-content: space-between;
}

.side-row .combo, .font-row { margin-left: 3px; }
.style-row { height: 27px; margin-top: 16px; }
.char-head { margin-top: 15px; }
.font-row { height: 27px; margin-top: 13px; justify-content: flex-start; gap: 4px; }
.side-row.font-row .combo { margin-left: 0; }
.font-row + .icons { margin-top: 2px; }
.icons { height: 40px; }
.para-head { margin-top: 11px; }
.para-head + .icons { margin-top: 9px; }

.cells {
    display: flex;
    align-items: center;
    height: 100%;
}

.cell {
    width: 36px;
    display: flex;
    justify-content: center;
}

.sidebar .drop { width: 17px; padding-left: 2px; }
.sidebar .pressed { width: 32px; }

.metrics {
    display: flex;
    margin-top: 8px;
    height: 170px;
}

.spacing-col { width: 185px; }
.indent-col { width: 137px; }

.metrics label, .hyphenation label {
    display: block;
    padding-left: 3px;
    font-size: 13.2px;
    line-height: 20px;
}

.metrics .cells {
    height: 24px;
    margin: 11px 0 9px;
}

.metrics .line-row { margin: 0; height: 34px; }

.field {
    display: flex;
    align-items: center;
    height: 30px;
    margin: 0 0 5px 10px;
}

.mini { width: 18px; height: 16px; }

.spin {
    width: 95px;
    height: 30px;
    flex: none;
    margin-left: 11px;
    padding: 0 6px 0 5px;
    display: flex;
    align-items: center;
    justify-content: space-between;
    background-color: #e8e8e8;
    border: 1px solid #cfcfcf;
    border-radius: 4px;
    font-size: 15.3px;
    color: var(--text);
}

.spin em {
    margin-right: 4px;
    font-size: 14px;
}

.spin div {
    color: #8a8a94;
    display: flex;
    flex-direction: column;
    gap: 4px;
}

.arrow { width: 9px; height: 6px; }

.hyphenation {
    display: flex;
    align-items: center;
    gap: 9px;
    margin-top: 4px;
}
```
